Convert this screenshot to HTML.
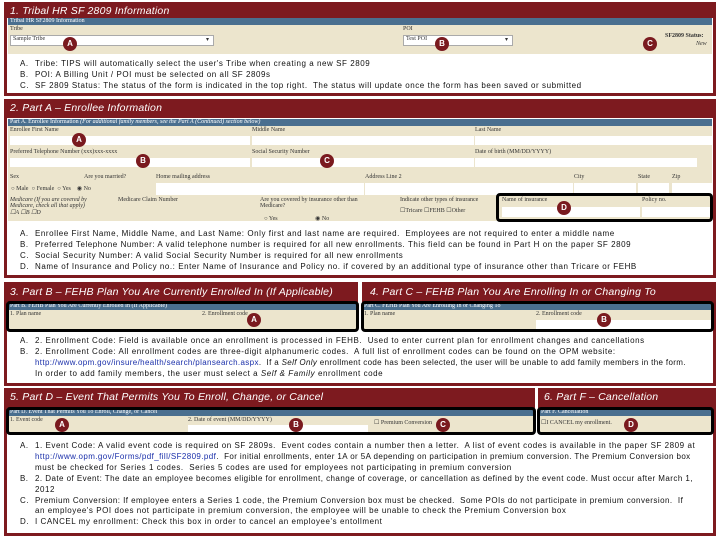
<!DOCTYPE html>
<html><head><meta charset="utf-8"><style>
*{margin:0;padding:0;box-sizing:border-box}
body{width:720px;height:540px;background:#fff;position:relative;overflow:hidden;font-family:"Liberation Sans",sans-serif}
.box{position:absolute;background:#7d1a1f}
.in{position:absolute;background:#fff}
.hd{position:absolute;color:#fff;font-style:italic;font-size:10.5px;letter-spacing:0.2px;white-space:nowrap}
.blue{position:absolute;background:#4a6f8f;color:#fff;font-family:"Liberation Serif",serif;font-size:6px;line-height:7px;padding-left:2px;white-space:nowrap;overflow:hidden}
.beige{position:absolute;background:#ece5cd;font-family:"Liberation Serif",serif;font-size:6px;color:#333}
.f{position:absolute;background:#fff}
.l{position:absolute;white-space:nowrap}
.t{position:absolute;font-size:8px;color:#111;white-space:nowrap;letter-spacing:0.55px;line-height:11px}
.t b{font-weight:normal;position:absolute;left:-15px}
.c{position:absolute;width:14px;height:14px;border-radius:50%;background:#7a1a1f;color:#fff;font-size:8px;font-weight:bold;text-align:center;line-height:14px;font-family:"Liberation Sans",sans-serif}
.blk{position:absolute;border:3px solid #000;border-radius:4px}
a{color:#1a2faa}
</style></head><body>

<!-- Section 1 -->
<div class="box" style="left:4px;top:2px;width:712px;height:94px"></div>
<div class="in" style="left:7px;top:18px;width:706px;height:75px"></div>
<div class="hd" style="left:10px;top:5px">1. Tribal HR SF 2809 Information</div>
<div class="blue" style="left:8px;top:18px;width:704px;height:7px">Tribal HR SF2809 Information</div>
<div class="beige" style="left:8px;top:25px;width:704px;height:29px">
 <div class="l" style="left:2px;top:1px">Tribe</div>
 <div class="f" style="left:2px;top:10px;width:204px;height:11px;border:1px solid #aaa;font-size:6px;padding-left:2px">Sample Tribe<span style="position:absolute;right:4px">▾</span></div>
 <div class="l" style="left:395px;top:1px">POI</div>
 <div class="f" style="left:395px;top:10px;width:110px;height:11px;border:1px solid #aaa;padding-left:2px">Test POI<span style="position:absolute;right:4px">▾</span></div>
 <div class="l" style="left:657px;top:8px;font-weight:bold">SF2809 Status:</div>
 <div class="l" style="left:688px;top:16px;font-style:italic">New</div>
</div>
<div class="c" style="left:63px;top:37px">A</div>
<div class="c" style="left:435px;top:37px">B</div>
<div class="c" style="left:643px;top:37px">C</div>
<div class="t" style="left:35px;top:58px"><b>A.</b>Tribe: TIPS will automatically select the user's Tribe when creating a new SF 2809</div>
<div class="t" style="left:35px;top:69px"><b>B.</b>POI: A Billing Unit / POI must be selected on all SF 2809s</div>
<div class="t" style="left:35px;top:80px"><b>C.</b>SF 2809 Status: The status of the form is indicated in the top right.&nbsp; The status will update once the form has been saved or submitted</div>

<!-- Section 2 -->
<div class="box" style="left:4px;top:99px;width:712px;height:179px"></div>
<div class="in" style="left:7px;top:118px;width:706px;height:157px"></div>
<div class="hd" style="left:10px;top:102px">2. Part A – Enrollee Information</div>
<div class="blue" style="left:8px;top:119px;width:704px;height:7px">Part A. Enrollee Information <i>(For additional family members, see the Part A (Continued) section below)</i></div>
<div class="beige" style="left:8px;top:126px;width:704px;height:95px">
 <div class="l" style="left:2px;top:1px">Enrollee First Name</div>
 <div class="f" style="left:2px;top:10px;width:240px;height:9px"></div>
 <div class="l" style="left:244px;top:1px">Middle Name</div>
 <div class="f" style="left:244px;top:10px;width:222px;height:9px"></div>
 <div class="l" style="left:467px;top:1px">Last Name</div>
 <div class="f" style="left:467px;top:10px;width:237px;height:9px"></div>
 <div class="l" style="left:2px;top:23px">Preferred Telephone Number (xxx)xxx-xxxx</div>
 <div class="f" style="left:2px;top:32px;width:240px;height:9px"></div>
 <div class="l" style="left:244px;top:23px">Social Security Number</div>
 <div class="f" style="left:244px;top:32px;width:222px;height:9px"></div>
 <div class="l" style="left:467px;top:23px">Date of birth (MM/DD/YYYY)</div>
 <div class="f" style="left:467px;top:32px;width:222px;height:9px"></div>
 <div class="l" style="left:2px;top:48px">Sex</div><div class="l" style="left:76px;top:48px">Are you married?</div>
 <div class="l" style="left:148px;top:48px">Home mailing address</div><div class="l" style="left:357px;top:48px">Address Line 2</div>
 <div class="l" style="left:566px;top:48px">City</div><div class="l" style="left:630px;top:48px">State</div><div class="l" style="left:664px;top:48px">Zip</div>
 <div class="f" style="left:148px;top:57px;width:208px;height:12px"></div>
 <div class="f" style="left:357px;top:57px;width:208px;height:12px"></div>
 <div class="f" style="left:566px;top:57px;width:62px;height:12px"></div>
 <div class="f" style="left:630px;top:57px;width:31px;height:12px"></div>
 <div class="f" style="left:664px;top:57px;width:40px;height:12px"></div>
 <div class="l" style="left:3px;top:59px">○ Male &nbsp;○ Female &nbsp;○ Yes &nbsp;&nbsp;&nbsp;◉ No</div>
 <div class="l" style="left:2px;top:71px;font-style:italic">Medicare (If you are covered by<br>Medicare, check all that apply)<br>☐A ☐B ☐D</div>
 <div class="l" style="left:110px;top:71px">Medicare Claim Number</div>
 <div class="l" style="left:252px;top:71px">Are you covered by insurance other than<br>Medicare?</div>
 <div class="l" style="left:256px;top:89px">○ Yes &nbsp;&nbsp;&nbsp;&nbsp;&nbsp;&nbsp;&nbsp;&nbsp;&nbsp;&nbsp;&nbsp;&nbsp;&nbsp;&nbsp;&nbsp;&nbsp;&nbsp;&nbsp;&nbsp;&nbsp;&nbsp;&nbsp;&nbsp;&nbsp;◉ No</div>
 <div class="l" style="left:392px;top:71px">Indicate other types of insurance</div>
 <div class="l" style="left:392px;top:81px">☐Tricare ☐FEHB ☐Other</div>
 <div class="l" style="left:494px;top:71px">Name of insurance</div><div class="l" style="left:634px;top:71px">Policy no.</div>
 <div class="f" style="left:494px;top:81px;width:138px;height:10px"></div>
 <div class="f" style="left:634px;top:81px;width:70px;height:10px"></div>
</div>
<div class="blk" style="left:496px;top:193px;width:217px;height:29px"></div>
<div class="c" style="left:72px;top:133px">A</div>
<div class="c" style="left:136px;top:154px">B</div>
<div class="c" style="left:320px;top:154px">C</div>
<div class="c" style="left:557px;top:201px">D</div>
<div class="t" style="left:35px;top:228px"><b>A.</b>Enrollee First Name, Middle Name, and Last Name: Only first and last name are required.&nbsp; Employees are not required to enter a middle name</div>
<div class="t" style="left:35px;top:239px"><b>B.</b>Preferred Telephone Number: A valid telephone number is required for all new enrollments. This field can be found in Part H on the paper SF 2809</div>
<div class="t" style="left:35px;top:250px"><b>C.</b>Social Security Number: A valid Social Security Number is required for all new enrollments</div>
<div class="t" style="left:35px;top:261px"><b>D.</b>Name of Insurance and Policy no.: Enter Name of Insurance and Policy no. if covered by an additional type of insurance other than Tricare or FEHB</div>

<!-- Section 3/4 -->
<div class="box" style="left:4px;top:282px;width:712px;height:104px"></div>
<div class="in" style="left:7px;top:302px;width:706px;height:81px"></div>
<div class="box" style="left:358px;top:282px;width:4px;height:20px;background:#fff"></div>
<div class="hd" style="left:10px;top:286px">3. Part B – FEHB Plan You Are Currently Enrolled In (If Applicable)</div>
<div class="hd" style="left:370px;top:286px">4. Part C – FEHB Plan You Are Enrolling In or Changing To</div>
<div class="blue" style="left:8px;top:303px;width:350px;height:7px">Part B. FEHB Plan You Are Currently Enrolled In (If Applicable)</div>
<div class="beige" style="left:8px;top:310px;width:350px;height:20px"><div class="l" style="left:2px;top:1px">1. Plan name</div><div class="l" style="left:194px;top:1px">2. Enrollment code</div></div>
<div class="blue" style="left:362px;top:303px;width:350px;height:7px">Part C. FEHB Plan You Are Enrolling In or Changing To</div>
<div class="beige" style="left:362px;top:310px;width:350px;height:20px"><div class="l" style="left:2px;top:1px">1. Plan name</div><div class="l" style="left:174px;top:1px">2. Enrollment code</div><div class="f" style="left:174px;top:10px;width:176px;height:10px"></div></div>
<div class="blk" style="left:6px;top:301px;width:353px;height:31px"></div>
<div class="blk" style="left:361px;top:301px;width:353px;height:31px"></div>
<div class="c" style="left:247px;top:313px">A</div>
<div class="c" style="left:597px;top:313px">B</div>
<div class="t" style="left:35px;top:335px"><b>A.</b>2. Enrollment Code: Field is available once an enrollment is processed in FEHB.&nbsp; Used to enter current plan for enrollment changes and cancellations</div>
<div class="t" style="left:35px;top:346px"><b>B.</b>2. Enrollment Code: All enrollment codes are three-digit alphanumeric codes.&nbsp; A full list of enrollment codes can be found on the OPM website:</div>
<div class="t" style="left:35px;top:357px;letter-spacing:0.35px"><a>http://www.opm.gov/insure/health/search/plansearch.aspx</a>.&nbsp; If a <i>Self Only</i> enrollment code has been selected, the user will be unable to add family members in the form.</div>
<div class="t" style="left:35px;top:368px">In order to add family members, the user must select a <i>Self &amp; Family</i> enrollment code</div>

<!-- Section 5/6 -->
<div class="box" style="left:4px;top:388px;width:712px;height:148px"></div>
<div class="in" style="left:7px;top:408px;width:706px;height:125px"></div>
<div class="box" style="left:535px;top:388px;width:3px;height:20px;background:#fff"></div>
<div class="hd" style="left:10px;top:391px">5. Part D – Event That Permits You To Enroll, Change, or Cancel</div>
<div class="hd" style="left:544px;top:391px">6. Part F – Cancellation</div>
<div class="blue" style="left:8px;top:409px;width:526px;height:7px">Part D. Event That Permits You To Enroll, Change, or Cancel</div>
<div class="beige" style="left:8px;top:416px;width:526px;height:17px"><div class="l" style="left:2px;top:1px">1. Event code</div><div class="l" style="left:180px;top:1px">2. Date of event (MM/DD/YYYY)</div><div class="f" style="left:180px;top:9px;width:180px;height:8px"></div><div class="l" style="left:366px;top:3px">☐ Premium Conversion</div></div>
<div class="blue" style="left:539px;top:409px;width:173px;height:7px">Part F. Cancellation</div>
<div class="beige" style="left:539px;top:416px;width:173px;height:17px"><div class="l" style="left:2px;top:3px">☐I CANCEL my enrollment.</div></div>
<div class="blk" style="left:6px;top:407px;width:530px;height:28px"></div>
<div class="blk" style="left:537px;top:407px;width:177px;height:28px"></div>
<div class="c" style="left:55px;top:418px">A</div>
<div class="c" style="left:289px;top:418px">B</div>
<div class="c" style="left:436px;top:418px">C</div>
<div class="c" style="left:624px;top:418px">D</div>
<div class="t" style="left:35px;top:440px"><b>A.</b>1. Event Code: A valid event code is required on SF 2809s.&nbsp; Event codes contain a number then a letter.&nbsp; A list of event codes is available in the paper SF 2809 at</div>
<div class="t" style="left:35px;top:451px;letter-spacing:0.4px"><a>http://www.opm.gov/Forms/pdf_fill/SF2809.pdf</a>.&nbsp; For initial enrollments, enter 1A or 5A depending on participation in premium conversion. The Premium Conversion box</div>
<div class="t" style="left:35px;top:462px">must be checked for Series 1 codes.&nbsp; Series 5 codes are used for employees not participating in premium conversion</div>
<div class="t" style="left:35px;top:473px;letter-spacing:0.45px"><b>B.</b>2. Date of Event: The date an employee becomes eligible for enrollment, change of coverage, or cancellation as defined by the event code. Must occur after March 1,</div>
<div class="t" style="left:35px;top:484px">2012</div>
<div class="t" style="left:35px;top:495px;letter-spacing:0.45px"><b>C.</b>Premium Conversion: If employee enters a Series 1 code, the Premium Conversion box must be checked.&nbsp; Some POIs do not participate in premium conversion.&nbsp; If</div>
<div class="t" style="left:35px;top:505px">an employee's POI does not participate in premium conversion, the employee will be unable to check the Premium Conversion box</div>
<div class="t" style="left:35px;top:516px"><b>D.</b>I CANCEL my enrollment: Check this box in order to cancel an employee's entollment</div>
</body></html>
